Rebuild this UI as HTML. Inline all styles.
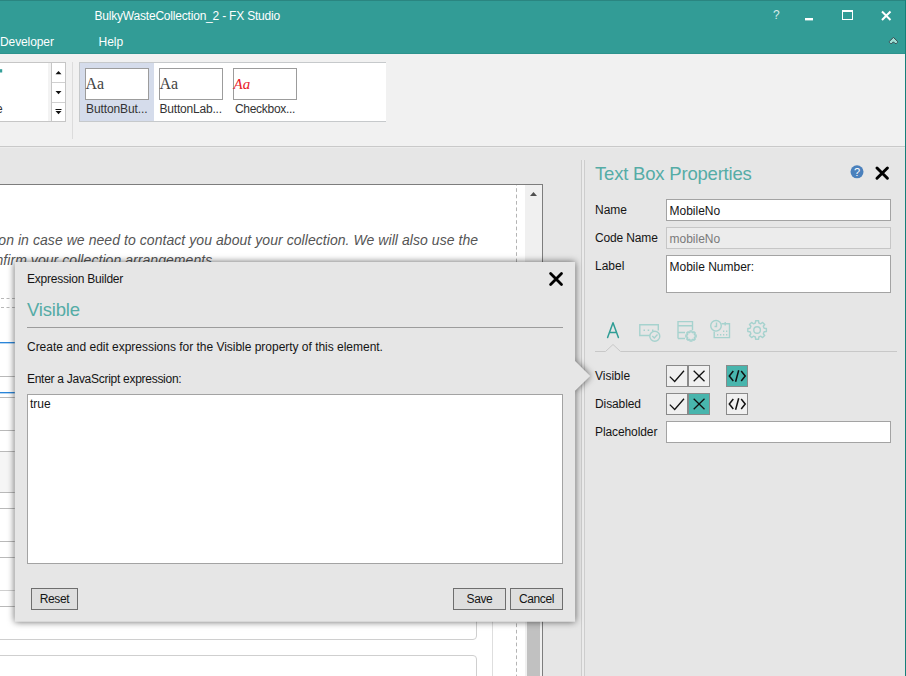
<!DOCTYPE html>
<html><head><meta charset="utf-8">
<style>
*{box-sizing:border-box;margin:0;padding:0}
html,body{width:906px;height:676px;overflow:hidden;background:#e6e6e6;font-family:"Liberation Sans",sans-serif;font-size:12px;color:#151515}
.abs{position:absolute}
.t{position:absolute;white-space:nowrap;line-height:14px}
svg{position:absolute;overflow:visible}
#titlebar{left:0;top:0;width:906px;height:54px;background:#329c96;border-top:1px solid #2a8580;border-bottom:1px solid #2d938d}
#ribbon{left:0;top:54px;width:905px;height:92px;background:#f1f1f1}
#ribline{left:0;top:146px;width:905px;height:1px;background:#c9c9c9}
#rborder{left:905px;top:0;width:1px;height:676px;background:#15807a}
.inp{position:absolute;background:#fff;border:1px solid #a3a3a3}
.btn{position:absolute;background:#dedede;border:1px solid #6e6e6e;text-align:center;line-height:21px;height:22px;letter-spacing:-.4px}
.tb{position:absolute;width:22px;height:22px;border:1px solid #8a8a8a;background:#f0f0f0}
.tb.on{background:#48b5ad}
.hl{position:absolute;left:0;height:1px;background:#b9b9b9}
.pv{position:absolute;top:68px;width:64px;height:32px;background:#fff;border:1px solid #9c9c9c}
.aa{position:absolute;white-space:nowrap;font-family:"Liberation Serif",serif;font-size:16px;line-height:18px;top:75.4px;color:#444}
</style></head><body>
<div id="titlebar" class="abs"></div>
<div class="t" style="left:94.5px;top:9px;color:#fff;letter-spacing:-.2px">BulkyWasteCollection_2 - FX Studio</div>
<div class="t" style="left:0px;top:35px;color:#fff;letter-spacing:-.1px">Developer</div>
<div class="t" style="left:98.5px;top:35px;color:#fff">Help</div>
<!-- window controls -->
<div class="t" style="left:773px;top:8px;color:#d8ecea;font-size:12px">?</div>
<svg style="left:0;top:0" width="906" height="53">
 <rect x="805" y="18" width="8" height="2.4" fill="#fff"/>
 <rect x="842.5" y="10.5" width="10" height="9" fill="none" stroke="#fff" stroke-width="1"/>
 <rect x="842" y="10" width="11" height="2" fill="#fff"/>
 <path d="M882 11.5L890.5 20M890.5 11.5L882 20" stroke="#fff" stroke-width="2" fill="none"/>
 <path d="M889.4 41.4L893.4 37.4L897.5 41.4V42.4L896.3 43.5H895.1L893.4 41.8L891.8 43.5H890.6L889.4 42.4Z" fill="#9fe0d6" stroke="#3d4a50" stroke-width="1" stroke-linejoin="round"/>
</svg>

<div id="ribbon" class="abs"></div>
<div id="ribline" class="abs"></div>
<div class="abs" style="left:0;top:147px;width:905px;height:1px;background:#ececec"></div>
<div id="rborder" class="abs"></div>

<!-- ribbon gallery left -->
<div class="abs" style="left:-1px;top:62px;width:67px;height:60px;background:#f3f3f3;border:1px solid #c6c6c6"></div>
<div class="abs" style="left:0;top:63px;width:48px;height:58px;background:#fff"></div>
<div class="abs" style="left:51px;top:63px;width:14px;height:58px;background:#fff;border-left:1px solid #c6c6c6"></div>
<div class="abs" style="left:52px;top:82px;width:13px;height:1px;background:#d0d0d0"></div>
<div class="abs" style="left:52px;top:102px;width:13px;height:1px;background:#d0d0d0"></div>
<svg style="left:0;top:0" width="80" height="130">
 <path d="M55.5 74.3L58.5 71L61.5 74.3Z" fill="#111"/>
 <path d="M55.5 91L61.5 91L58.5 94.3Z" fill="#111"/>
 <path d="M55.5 111L61.5 111L58.5 114.3Z" fill="#111"/>
 <rect x="55.5" y="109" width="6" height="1" fill="#111"/>
 <rect x="0" y="69.2" width="2.2" height="3.3" fill="#35a099"/>
</svg>
<div class="t" style="left:-4px;top:102px;color:#333">e</div>
<div class="abs" style="left:72px;top:62px;width:1px;height:77px;background:#dcdcdc"></div>
<!-- gallery 2 -->
<div class="abs" style="left:79px;top:62px;width:307px;height:60px;background:#fff;border:1px solid #c6c9cb;border-right:none"></div>
<div class="abs" style="left:80px;top:63px;width:74px;height:58px;background:#d5dceb"></div>
<div class="pv" style="left:85px"></div>
<div class="pv" style="left:159px"></div>
<div class="pv" style="left:233px"></div>
<div class="aa" style="left:85.5px">Aa</div>
<div class="aa" style="left:159.5px">Aa</div>
<div class="aa" style="left:233.5px;color:#e8202a;font-style:italic;font-size:15px">Aa</div>
<div class="t" style="left:86px;top:102px;color:#333;letter-spacing:-.1px">ButtonBut...</div>
<div class="t" style="left:159.5px;top:102px;color:#333;letter-spacing:-.2px">ButtonLab...</div>
<div class="t" style="left:235px;top:102px;color:#333;letter-spacing:-.3px">Checkbox...</div>

<!-- canvas -->
<div class="abs" style="left:-1px;top:184px;width:544px;height:500px;background:#fff;border:1px solid #7d7d7d"></div>
<div class="abs" style="left:525px;top:185px;width:17px;height:500px;background:#f0f0f0"></div>
<div class="abs" style="left:527px;top:600px;width:13px;height:80px;background:#c1c1c1"></div>
<svg style="left:0;top:0" width="560" height="676"><path d="M516.5 185V676" stroke="#b4b4b4" stroke-width="1" stroke-dasharray="3.7 2.7" stroke-dashoffset="3.2" fill="none"/></svg>
<div class="abs" style="left:492px;top:600px;width:1px;height:80px;background:#dedede"></div>
<svg style="left:0;top:0" width="560" height="200"><path d="M530 196L533.5 192L537 196Z" fill="#505050"/></svg>
<div class="t" style="left:-1.7px;top:232px;font-size:14px;line-height:16px;font-style:italic;color:#555;letter-spacing:.06px">on in case we need to contact you about your collection. We will also use the</div>
<div class="t" style="left:-4.5px;top:252.3px;font-size:14px;line-height:16px;font-style:italic;color:#555;letter-spacing:.06px">nfirm your collection arrangements.</div>
<!-- left strip lines -->
<div class="abs" style="left:1px;top:298px;width:14px;height:0;border-top:1px dashed #b8b8b8"></div>
<div class="abs" style="left:1px;top:307px;width:14px;height:0;border-top:1px dashed #b8b8b8"></div>
<div class="hl" style="top:342px;width:15px;background:#2a86da;box-shadow:0 1px 0 rgba(42,134,218,.35)"></div>
<div class="hl" style="top:376px;width:15px"></div>
<div class="hl" style="top:392px;width:15px;background:#2a86da;box-shadow:0 1px 0 rgba(42,134,218,.35)"></div>
<div class="hl" style="top:397px;width:15px"></div>
<div class="hl" style="top:430px;width:15px"></div>
<div class="abs" style="left:0;top:451px;width:15px;height:42px;background:#f5f5f5"></div>
<div class="hl" style="top:451px;width:15px"></div>
<div class="hl" style="top:492px;width:15px"></div>
<div class="hl" style="top:508px;width:15px"></div>
<div class="hl" style="top:541px;width:15px"></div>
<div class="hl" style="top:557px;width:15px"></div>
<div class="hl" style="top:590px;width:15px"></div>
<div class="hl" style="top:606px;width:15px"></div>
<!-- rounded boxes below dialog -->
<div class="abs" style="left:-5px;top:590px;width:482px;height:50px;border:1px solid #cfcfcf;border-radius:4px"></div>
<div class="abs" style="left:-5px;top:655px;width:482px;height:40px;border:1px solid #cfcfcf;border-radius:4px"></div>

<!-- right panel -->
<div class="abs" style="left:581px;top:160px;width:4px;height:520px;background:#ebebeb;border-left:1px solid #cdcdcd;border-right:1px solid #cdcdcd"></div>
<div class="t" style="left:595px;top:163px;font-size:18.5px;line-height:22px;color:#55aca6;letter-spacing:-.2px">Text Box Properties</div>
<svg style="left:0;top:0" width="906" height="200">
 <circle cx="857" cy="171.8" r="6.5" fill="#4a80bc"/>
 <path d="M877 168L887.4 178.2M887.4 168L877 178.2" stroke="#000" stroke-width="3" stroke-linecap="round"/>
</svg>
<div class="t" style="left:854px;top:165px;font-size:11px;color:#fff">?</div>
<div class="t" style="left:595px;top:203px">Name</div>
<div class="t" style="left:595px;top:231px;letter-spacing:-.15px">Code Name</div>
<div class="t" style="left:595px;top:259px">Label</div>
<div class="inp" style="left:666px;top:199px;width:225px;height:22px"></div>
<div class="inp" style="left:666px;top:227px;width:225px;height:22px;background:#ececec;border-color:#c6c6c6"></div>
<div class="inp" style="left:666px;top:255px;width:225px;height:38px"></div>
<div class="t" style="left:669.5px;top:204px">MobileNo</div>
<div class="t" style="left:669.5px;top:232px;color:#7a7a7a">mobileNo</div>
<div class="t" style="left:669.5px;top:260px">Mobile Number:</div>

<!-- tab icons -->
<svg style="left:0;top:0" width="906" height="360" fill="none">
 <path d="M595 351.5H605.5L613 344.5L620.5 351.5H897" stroke="#c8c8c8" stroke-width="1"/>
 <path d="M607.6 337.5L613 322.8L618.4 337.5M609.6 332.5H616.4" stroke="#2f9d95" stroke-width="1.5" stroke-linejoin="round" stroke-linecap="round"/>
 <g stroke="#a6d2ce" stroke-width="1.4">
  <path d="M650 335.5H639.8V324.8H658.3V330.5"/>
  <circle cx="654.8" cy="336.2" r="5"/>
  <path d="M652.3 336L654.3 338L657.5 334.6"/>
  <path d="M643.5 330.2H645M647.7 330.2H649.2M652 330.2H653.5" stroke-width="1.6"/>
  <path d="M678 338.5V321.6H692.5V330M678 325.8H692.5M678 332.5H685M678 338.5H685"/>
  <path d="M690.0 332.3L690.0 330.9L692.0 330.9L692.0 332.3L692.9 332.7L693.9 331.7L695.3 333.1L694.3 334.1L694.7 335.0L696.1 335.0L696.1 337.0L694.7 337.0L694.3 337.9L695.3 338.9L693.9 340.3L692.9 339.3L692.0 339.7L692.0 341.1L690.0 341.1L690.0 339.7L689.1 339.3L688.1 340.3L686.7 338.9L687.7 337.9L687.3 337.0L685.9 337.0L685.9 335.0L687.3 335.0L687.7 334.1L686.7 333.1L688.1 331.7L689.1 332.7Z" stroke-linejoin="round" fill="#e6e6e6"/>
  <circle cx="716" cy="325.8" r="5.3"/>
  <path d="M716.5 322.5V326.5H714.5"/>
  <path d="M721.5 323.8H729.5V337.6H714.2V331.5M725.2 322V325.5"/>
  <path d="M717 334.8H718.3M720 334.8H721.3M723 334.8H724.3M726 334.8H727.3M723 331.3H724.3M726 331.3H727.3" stroke-width="1.4"/>
  <circle cx="757.1" cy="330" r="3.3"/>
  <path d="M755.4 323.0L755.6 320.7L758.6 320.7L758.8 323.0L760.8 323.8L762.6 322.4L764.7 324.5L763.3 326.3L764.1 328.3L766.4 328.5L766.4 331.5L764.1 331.7L763.3 333.7L764.7 335.5L762.6 337.6L760.8 336.2L758.8 337.0L758.6 339.3L755.6 339.3L755.4 337.0L753.4 336.2L751.6 337.6L749.5 335.5L750.9 333.7L750.1 331.7L747.8 331.5L747.8 328.5L750.1 328.3L750.9 326.3L749.5 324.5L751.6 322.4L753.4 323.8Z" stroke-linejoin="round"/>
 </g>
</svg>

<div class="t" style="left:595px;top:369px">Visible</div>
<div class="t" style="left:595px;top:397px;letter-spacing:-.1px">Disabled</div>
<div class="t" style="left:595px;top:425px;letter-spacing:-.1px">Placeholder</div>
<div class="tb" style="left:666px;top:365px"></div>
<div class="tb" style="left:688px;top:365px"></div>
<div class="tb on" style="left:726px;top:365px"></div>
<div class="tb" style="left:666px;top:393px"></div>
<div class="tb on" style="left:688px;top:393px"></div>
<div class="tb" style="left:726px;top:393px"></div>
<svg style="left:0;top:0" width="906" height="430" fill="none" stroke="#111" stroke-width="1.3">
 <g id="g1">
  <path d="M669.8 376.6L674.7 381.5L684 370.8"/>
  <path d="M693.7 370.7L704.5 381.3M704.5 370.7L693.7 381.3"/>
  <path d="M733.3 371L729.3 376L733.3 381M738.7 370.3L735.6 381.7M741.2 371L745.2 376L741.2 381" stroke-width="1.5"/>
 </g>
 <g transform="translate(0,28)">
  <path d="M669.8 376.6L674.7 381.5L684 370.8"/>
  <path d="M693.7 370.7L704.5 381.3M704.5 370.7L693.7 381.3"/>
  <path d="M733.3 371L729.3 376L733.3 381M738.7 370.3L735.6 381.7M741.2 371L745.2 376L741.2 381" stroke-width="1.5"/>
 </g>
</svg>
<div class="inp" style="left:666px;top:421px;width:225px;height:22px"></div>

<!-- dialog -->
<svg style="left:0;top:0;filter:drop-shadow(0 0 3.5px rgba(0,0,0,.62))" width="906" height="676">
 <path d="M14.8 262H575.1V361.1L590.2 376L575.1 390.8V621.7H14.8Z" fill="#e6e6e6"/>
</svg>
<svg style="left:0;top:0" width="906" height="676">
 <path d="M550.6 273.6L561.5 284.5M561.5 273.6L550.6 284.5" stroke="#000" stroke-width="2.8" stroke-linecap="round"/>
</svg>
<div class="t" style="left:27px;top:272px;letter-spacing:-.22px">Expression Builder</div>
<div class="t" style="left:27px;top:299px;font-size:18.5px;line-height:22px;color:#55aca6;letter-spacing:-.2px">Visible</div>
<div class="abs" style="left:27px;top:327px;width:536px;height:1px;background:#9c9c9c"></div>
<div class="t" style="left:27px;top:340px;letter-spacing:-.02px">Create and edit expressions for the Visible property of this element.</div>
<div class="t" style="left:27px;top:372px;letter-spacing:-.28px">Enter a JavaScript expression:</div>
<div class="inp" style="left:27px;top:394px;width:536px;height:170px"></div>
<div class="t" style="left:30px;top:397px">true</div>
<div class="btn" style="left:31px;top:588px;width:47px">Reset</div>
<div class="btn" style="left:453px;top:588px;width:53px">Save</div>
<div class="btn" style="left:510px;top:588px;width:53px">Cancel</div>
</body></html>
